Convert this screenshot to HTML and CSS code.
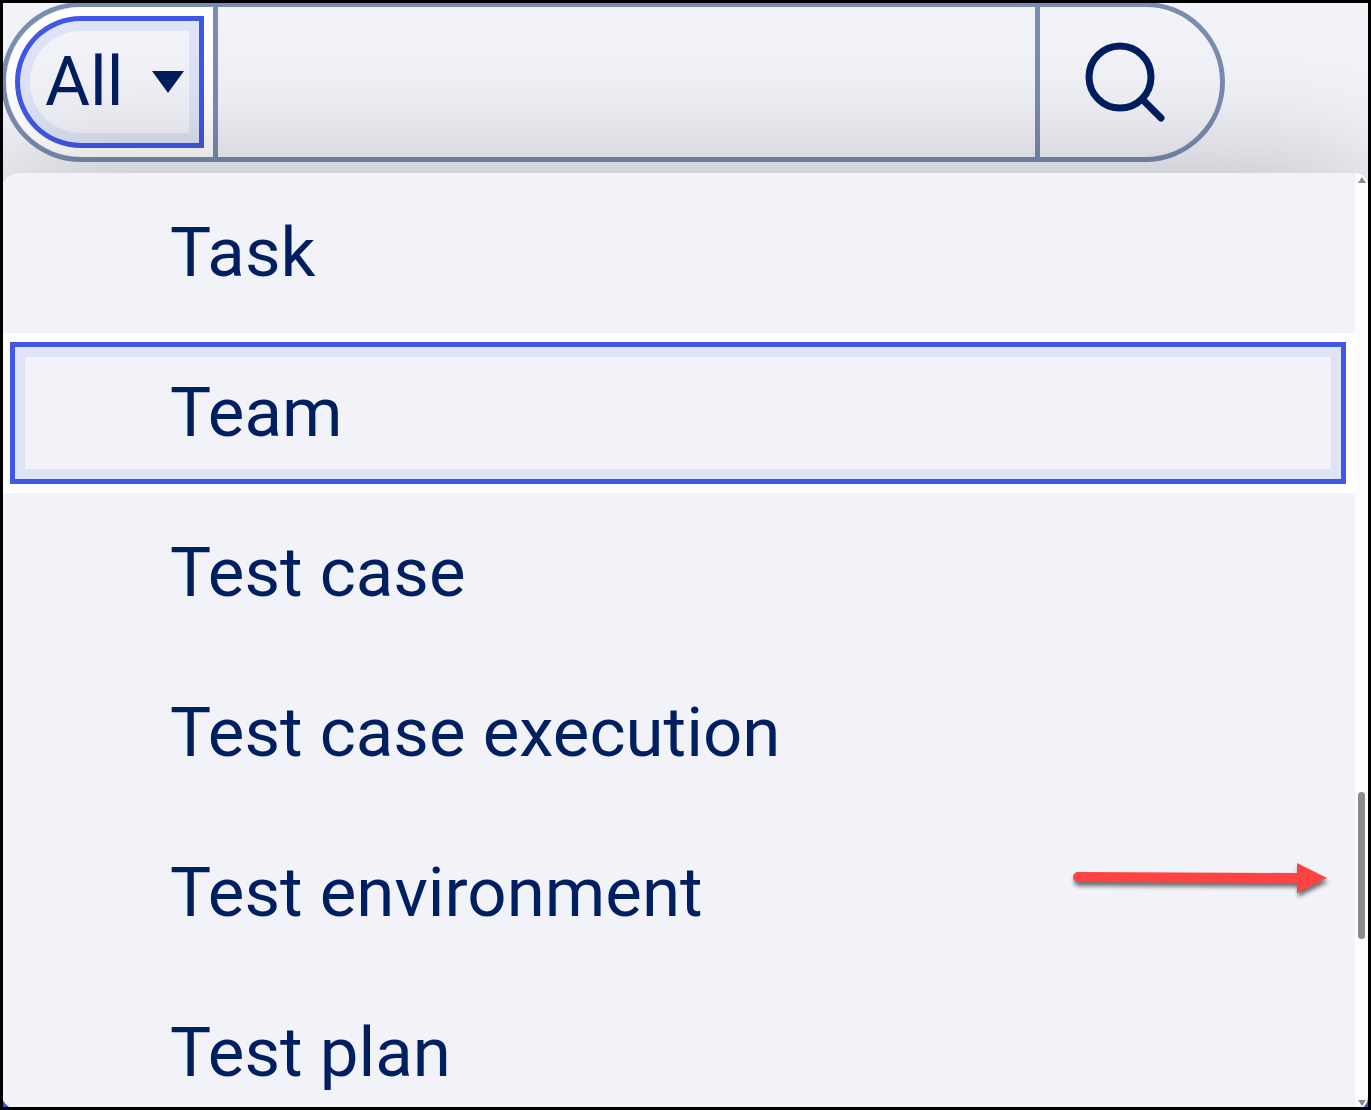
FILE: index.html
```html
<!doctype html>
<html lang="en">
<head>
<meta charset="UTF-8">
<title>Search</title>
<meta name="viewport" content="width=device-width,initial-scale=1">
<link rel="stylesheet" href="styles.css">
</head>

<body>
<div class="page">

 <form class="search" role="search">
  <div class="scope">
   <select class="scope-select focus-ring" id="scope" aria-label="Search in">
    <option>All</option>
   </select>
   <svg class="scope-caret" width="32" height="22" viewBox="0 0 32 22" aria-hidden="true">
    <path d="M0 0H32L16 22Z" fill="#001f60"/>
   </svg>
  </div>
  <input class="search-input" type="text" aria-label="Search text">
  <button class="search-button" type="submit" aria-label="Search">
   <svg width="80" height="80" viewBox="0 0 80 80" fill="none" stroke="#001f60" stroke-width="7" stroke-linecap="round" aria-hidden="true">
    <circle cx="35" cy="35" r="31"/>
    <path d="M58 58L76 76"/>
   </svg>
  </button>
 </form>

 <div class="menu">
  <ul class="menu-list">
   <li><button class="menu-item" type="button">Task</button></li>
   <li><button class="menu-item focus-ring" type="button">Team</button></li>
   <li><button class="menu-item" type="button">Test case</button></li>
   <li><button class="menu-item" type="button">Test case execution</button></li>
   <li><button class="menu-item" type="button">Test environment</button></li>
   <li><button class="menu-item" type="button">Test plan</button></li>
  </ul>
  <div class="scrollbar" aria-hidden="true">
   <svg width="8" height="6" viewBox="0 0 8 6"><path d="M4 0L8 6H0Z" fill="#8b8b8b"/></svg>
   <div class="track"><div class="thumb"></div></div>
   <svg width="8" height="6" viewBox="0 0 8 6"><path d="M0 0H8L4 6Z" fill="#8b8b8b"/></svg>
  </div>

  <svg class="pointer" width="270" height="50" viewBox="0 0 270 50" aria-hidden="true">
   <path d="M18 12L237 13V3L267 18L237 33V23L18 22A5 5 0 0 1 18 12Z" fill="#ff4343"/>
  </svg>
 </div>

</div>
</body>
</html>
```

FILE: styles.css
```css
* {
    box-sizing: border-box;
}
body {
    margin: 0;
    font-family: Roboto, "Liberation Sans", sans-serif;
    font-size: 69px;
    color: #001f60;
    background: linear-gradient(#f2f3f9 50%, #4158e6 50%) no-repeat;
}
/* black frame round the window */
body::after {
    content: "";
    position: fixed;
    inset: 0;
    border: 3px solid #000;
    pointer-events: none;
}
button, input, select {
    margin: 0;
    border: 0;
    border-radius: 0;
    outline: 0;
    background: none;
    color: inherit;
    font: inherit;
}
.page {
    display: flex;
    flex-direction: column;
    gap: 11px;
    height: 100vh;
    padding: 2px 3px 0 1px;
    overflow: hidden;
}
.focus-ring {
    box-shadow: inset 0 0 0 9px #fff, inset 0 0 0 14px #4158e6, inset 0 0 0 24px #dee3f7;
}

/* search bar */
.search {
    display: flex;
    flex: none;
    height: 160px;
    margin-right: 143px;
    border: 5px solid #7a8cb0;
    border-radius: 80px;
}
.scope {
    display: grid;
    flex: none;
    width: 212px;
    border-right: 5px solid #7a8cb0;
}
.scope-select, .scope-caret {
    grid-area: 1 / 1;
}
.scope-select {
    appearance: none;
    width: 100%;
    padding: 0 0 1px 39px;
    border-radius: 75px 0 0 75px;
}
.scope-caret {
    place-self: center end;
    margin-right: 29px;
    pointer-events: none;
}
.search-input {
    flex: 1;
    min-width: 0;
    padding: 0 32px;
}
.search-button {
    display: flex;
    flex: none;
    align-items: center;
    justify-content: center;
    width: 185px;
    padding: 0 10px 0 0;
    border-left: 5px solid #7a8cb0;
}

/* drop-down list */
.menu {
    position: relative;
    display: flex;
    flex: 1;
    min-height: 0;
    border-radius: 18px;
    background: #f2f3f8;
    box-shadow: 0 0 130px rgba(0, 0, 0, 0.25);
}
.menu-list {
    flex: 1;
    margin: 0;
    padding: 0;
    overflow: hidden;
    list-style: none;
    border-radius: 18px 0 0 18px;
}
.menu-item {
    display: block;
    width: 100%;
    height: 160px;
    padding: 0 0 1px 169px;
    text-align: left;
}
.scrollbar {
    display: flex;
    flex: none;
    flex-direction: column;
    align-items: center;
    width: 13px;
    padding: 4px 0;
    overflow: hidden;
    border-radius: 0 18px 18px 0;
    background: #fcfcfc;
}
.track {
    flex: 1;
    width: 7px;
    padding-top: 609px;
}
.thumb {
    height: 147px;
    border-radius: 4px;
    background: #8b8b8b;
}

/* arrow that points at the scrollbar */
.pointer {
    position: absolute;
    top: 687px;
    right: 38px;
    filter: drop-shadow(1px 4px 2px rgba(0, 0, 0, 0.55));
}
```
